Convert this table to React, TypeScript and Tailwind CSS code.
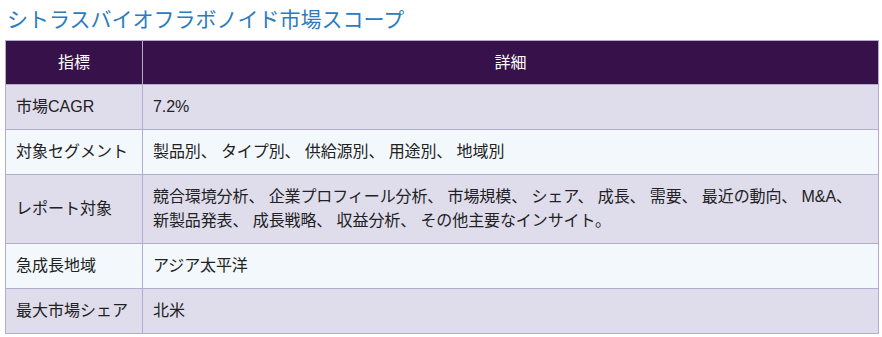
const rows: { label: string; value: string[] }[] = [
  { label: '市場CAGR', value: ['7.2%'] },
  { label: '対象セグメント', value: ['製品別、 タイプ別、 供給源別、 用途別、 地域別'] },
  {
    label: 'レポート対象',
    value: [
      '競合環境分析、 企業プロフィール分析、 市場規模、 シェア、 成長、 需要、 最近の動向、 M&A、',
      '新製品発表、 成長戦略、 収益分析、 その他主要なインサイト。',
    ],
  },
  { label: '急成長地域', value: ['アジア太平洋'] },
  { label: '最大市場シェア', value: ['北米'] },
];

export default function App() {
  return (
    <div className="min-h-[337px] bg-white pl-[5px] pr-[3px] font-['Liberation_Sans','Noto_Sans_CJK_JP',sans-serif] text-[#222]">
      <h2 className="pt-[2px] pb-[5px] pl-[2px] font-['Noto_Sans_CJK_JP',sans-serif] text-[21px] leading-[33px] font-normal text-[#2b7bbd]">
        シトラスバイオフラボノイド市場スコープ
      </h2>

      <table className="w-full border-collapse text-[16px] leading-[24px]">
        <thead>
          <tr className="bg-[#36114a] text-white">
            <th className="w-[137px] border border-[#b3accf] py-[10px] font-normal leading-[23px]">指標</th>
            <th className="border border-[#b3accf] py-[10px] font-normal leading-[23px]">詳細</th>
          </tr>
        </thead>
        <tbody>
          {rows.map((row, i) => (
            <tr key={row.label} className={i % 2 === 0 ? 'bg-[#dfdcec]' : 'bg-[#f3f8fd]'}>
              <td className="border border-[#b3accf] px-[10px] py-[10px] align-middle">{row.label}</td>
              <td className="border border-[#b3accf] px-[10px] py-[10px] align-middle tracking-[-0.1px]">
                {row.value.map((line, j) => (
                  <span key={j}>
                    {j > 0 && <br />}
                    {line}
                  </span>
                ))}
              </td>
            </tr>
          ))}
        </tbody>
      </table>
    </div>
  );
}
